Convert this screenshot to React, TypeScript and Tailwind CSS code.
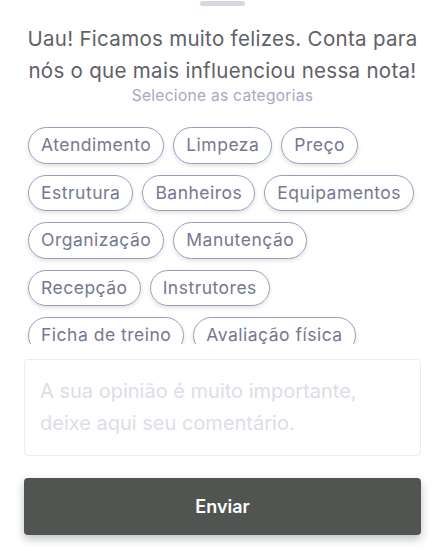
import React from "react";

const rows = [
  ["Atendimento", "Limpeza", "Preço"],
  ["Estrutura", "Banheiros", "Equipamentos"],
  ["Organização", "Manutenção"],
  ["Recepção", "Instrutores"],
  ["Ficha de treino", "Avaliação física"],
];

export default function App() {
  return (
    <div
      className="w-[445px] h-[551px] bg-white overflow-hidden relative"
      style={{ fontFamily: "Inter, 'Open Sans', sans-serif" }}
    >
      <div className="flex justify-center pt-px">
        <div className="w-[45px] h-[5px] rounded-full bg-[#d5d8e3]" />
      </div>
      <div className="mt-[17px] text-center text-[20.5px] leading-[32px] tracking-[0.3px] text-[#5f6166] whitespace-nowrap">
        Uau! Ficamos muito felizes. Conta para
        <br />
        nós o que mais influenciou nessa nota!
      </div>
      <div className="text-center text-[15.5px] leading-[18px] tracking-[0.3px] text-[#a6a8c4]">
        Selecione as categorias
      </div>
      <div className="mt-[21px] h-[218px] overflow-hidden px-[28px] pt-[1px]">
        <div className="flex flex-col gap-[11px]">
          {rows.map((r, i) => (
            <div key={i} className="flex gap-[9px]">
              {r.map((c) => (
                <div
                  key={c}
                  className="h-[36.5px] px-[12px] flex items-center rounded-full border border-[#9a9eb5] text-[17.5px] tracking-[0.5px] text-[#747893] shadow-[0_2px_4px_rgba(0,0,0,0.12)] whitespace-nowrap"
                >
                  {c}
                </div>
              ))}
            </div>
          ))}
        </div>
      </div>
      <div className="mx-[24px] mt-[15px] h-[97px] rounded-[4px] border border-[#ececf0] px-[15px] pt-[15px] text-[20px] leading-[32px] text-[#dcdde6]">
        A sua opinião é muito importante,
        <br />
        deixe aqui seu comentário.
      </div>
      <div className="mx-[24px] mt-[22px] h-[57px] rounded-[4px] bg-[#515552] flex items-center justify-center text-white text-[18px] font-semibold shadow-[0_4px_10px_rgba(0,0,0,0.25)]">
        Enviar
      </div>
    </div>
  );
}
